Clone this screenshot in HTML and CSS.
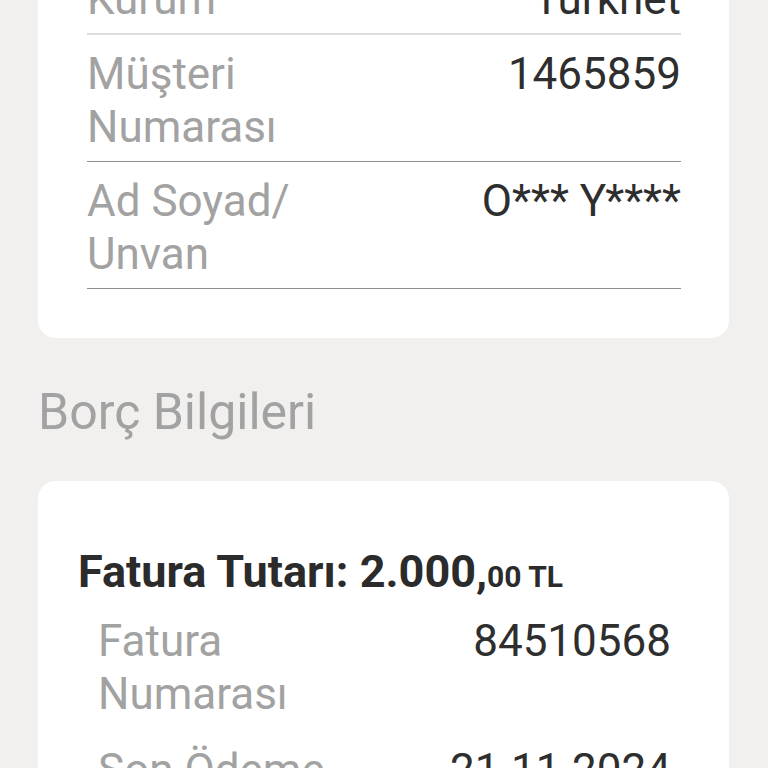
FILE: index.html
```html
<!DOCTYPE html>
<html lang="tr">
<head>
    <meta charset="UTF-8">
    <meta name="viewport" content="width=device-width, initial-scale=1.0">
    <title>Fatura Detayı</title>
    <link rel="stylesheet" href="styles.css">
</head>
<body>
    <div class="page">
        <section class="card card-info">
            <div class="info-row info-row-first">
                <span class="label">Kurum</span>
                <span class="value">Türknet</span>
            </div>
            <div class="info-row">
                <span class="label">Müşteri Numarası</span>
                <span class="value">1465859</span>
            </div>
            <div class="info-row">
                <span class="label">Ad Soyad/ Unvan</span>
                <span class="value">O*** Y****</span>
            </div>
        </section>

        <h2 class="section-title">Borç Bilgileri</h2>

        <section class="card card-debt">
            <div class="debt-title">Fatura Tutarı: <span class="amount">2.000,<small>00 TL</small></span></div>
            <div class="debt-row">
                <span class="label">Fatura Numarası</span>
                <span class="value">84510568</span>
            </div>
            <div class="debt-row">
                <span class="label">Son Ödeme Tarihi</span>
                <span class="value">21.11.2024</span>
            </div>
        </section>
    </div>
</body>
</html>
```

FILE: styles.css
```css
html, body {
    margin: 0;
    height: 100%;
    overflow: hidden;
}

body {
    font-family: 'Roboto', 'Liberation Sans', sans-serif;
    background: #f1f0ee;
    color: #2e2e2e;
}

.page {
    padding: 0 39px 0 38px;
}

.card {
    background: #ffffff;
    border-radius: 18px;
}

/* Kurum bilgileri */
.card-info {
    margin-top: -80px;
    padding: 40px 48px 49px 49px;
}

.info-row,
.debt-row {
    display: flex;
    font-size: 44px;
    line-height: 53px;
}

.info-row {
    padding: 13px 0 7px;
    border-bottom: 1px solid #8e8e8e;
}

.info-row-first {
    border-bottom: 2px solid #dddddd;
}

.label {
    flex: 1;
    color: #a2a2a2;
}

.value {
    flex: 1;
    text-align: right;
    color: #2e2e2e;
}

.section-title {
    margin: 44px 0 39px;
    font-size: 50px;
    line-height: 60px;
    font-weight: normal;
    color: #a2a2a2;
}

/* Borç bilgileri */
.card-debt {
    padding: 64px 40px 40px;
}

.debt-title {
    font-size: 45px;
    line-height: 53px;
    font-weight: bold;
    color: #2b2b2b;
}

.debt-title small {
    font-size: 30px;
}

.debt-row {
    padding: 12px 18px 11px 20px;
}
```
